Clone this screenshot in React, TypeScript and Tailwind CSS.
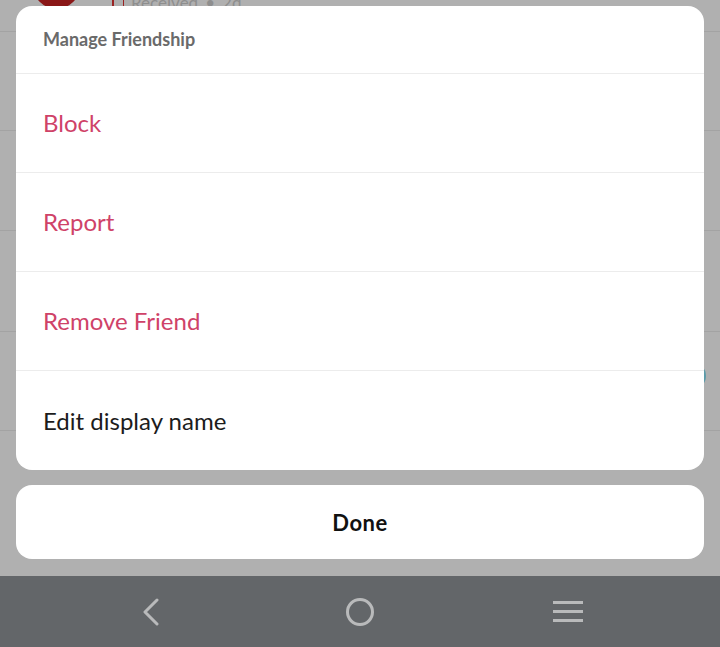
import React from "react";

const rows = [
  { label: "Block", danger: true },
  { label: "Report", danger: true },
  { label: "Remove Friend", danger: true },
  { label: "Edit display name", danger: false },
];

export default function App() {
  return (
    <div
      className="relative w-[720px] h-[647px] overflow-hidden bg-[#b0b0b0]"
      style={{ fontFamily: "Lato, 'Open Sans', sans-serif" }}
    >
      {/* dimmed list behind the sheet */}
      <div className="flex flex-col">
        <div className="h-[32px] border-b border-[#a3a3a3] flex items-start pl-[33px] overflow-hidden">
          <div className="w-[47px] h-[47px] -mt-[38px] rounded-full bg-[#8a1717] shrink-0" />
          <div className="ml-[32px] -mt-[7px] flex items-center gap-[7px] text-[17px] leading-[20px] text-[#8e8e8e]">
            <span className="w-[12px] h-[14px] border-l-2 border-r border-[#9a2323]" />
            <span>Received</span>
            <span>•</span>
            <span>2d</span>
          </div>
        </div>
        <div className="h-[99px] border-b border-[#a3a3a3]" />
        <div className="h-[100px] border-b border-[#a3a3a3]" />
        <div className="h-[101px] border-b border-[#a3a3a3]" />
        <div className="h-[99px] border-b border-[#a3a3a3] flex justify-end items-center">
          <div className="w-[28px] h-[28px] rounded-full bg-[#5b9aa8] mr-[14px] -translate-y-[5px]" />
        </div>
      </div>

      {/* sheet */}
      <div className="absolute inset-x-0 top-0 bottom-[71px] flex flex-col px-4 pt-[6px]">
        <div className="bg-white rounded-[16px] overflow-hidden">
          <div className="h-[68px] flex items-center px-[27px] border-b border-[#ececec]">
            <span className="text-[18px] font-bold text-[#6a6a6a]">Manage Friendship</span>
          </div>
          {rows.map((r, i) => (
            <div
              key={r.label}
              className={
                "h-[99px] flex items-center px-[27px] " +
                (i < rows.length - 1 ? "border-b border-[#ececec]" : "")
              }
            >
              <span className={"text-[24px] " + (r.danger ? "text-[#cf4268]" : "text-[#1c1c1c]")}>
                {r.label}
              </span>
            </div>
          ))}
        </div>
        <div className="mt-[15px] h-[74px] bg-white rounded-[16px] flex items-center justify-center">
          <span className="text-[22px] font-bold tracking-[0.5px] text-[#111]">Done</span>
        </div>
      </div>

      {/* android nav bar */}
      <div className="absolute inset-x-0 bottom-0 h-[71px] bg-[#636669] flex items-center pl-[142px]">
        <svg width="18" height="28" viewBox="0 0 18 28">
          <path d="M15 2 L3 14 L15 26" fill="none" stroke="#b9babb" strokeWidth="3" strokeLinecap="round" strokeLinejoin="round" />
        </svg>
        <svg width="30" height="30" viewBox="0 0 30 30" className="ml-[185px]">
          <circle cx="15" cy="15" r="12.5" fill="none" stroke="#b9babb" strokeWidth="3" />
        </svg>
        <svg width="30" height="24" viewBox="0 0 30 24" className="ml-[178px]">
          <rect x="0" y="1" width="30" height="3" fill="#b9babb" />
          <rect x="0" y="10" width="30" height="3" fill="#b9babb" />
          <rect x="0" y="19" width="30" height="3" fill="#b9babb" />
        </svg>
      </div>
    </div>
  );
}
